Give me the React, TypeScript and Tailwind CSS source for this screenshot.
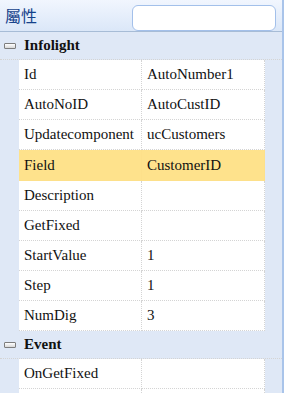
import React from "react";

type Row = { name: string; value: string; selected?: boolean };

const groups: { title: string; rows: Row[] }[] = [
  {
    title: "Infolight",
    rows: [
      { name: "Id", value: "AutoNumber1" },
      { name: "AutoNoID", value: "AutoCustID" },
      { name: "Updatecomponent", value: "ucCustomers" },
      { name: "Field", value: "CustomerID", selected: true },
      { name: "Description", value: "" },
      { name: "GetFixed", value: "" },
      { name: "StartValue", value: "1" },
      { name: "Step", value: "1" },
      { name: "NumDig", value: "3" },
    ],
  },
  {
    title: "Event",
    rows: [
      { name: "OnGetFixed", value: "" },
      { name: "", value: "" },
    ],
  },
];

function Collapse() {
  return (
    <span className="ml-[4px] mr-[8px] block h-[6px] w-[12px] rounded-[1px] border border-[#7d7d7d] bg-gradient-to-b from-white to-[#d8d8d8]" />
  );
}

function PropRow({ row }: { row: Row }) {
  const cell = row.selected
    ? "border-[#fde08a] bg-[#fee28c]"
    : "border-[#d4d4d4] border-dotted bg-white";
  return (
    <div className={`flex ${row.selected ? "h-[31px]" : "h-[30px]"}`}>
      <div className="w-[19px] shrink-0" />
      <div className={`flex w-[123px] shrink-0 items-center border-b border-r pl-[5px] ${cell}`}>
        {row.name}
      </div>
      <div className={`flex w-[123px] shrink-0 items-center border-b border-r pl-[5px] ${cell}`}>
        {row.value}
      </div>
    </div>
  );
}

export default function App() {
  return (
    <div className="h-[393px] w-[284px] overflow-hidden border-r-2 border-[#a9c4ea] bg-[#dfe8f6] font-['Liberation_Serif',serif] text-[15px] text-[#111]">
      <div className="flex h-[32px] items-start justify-between border-b border-[#a7bcd6] bg-gradient-to-b from-[#f1f6fe] to-[#dbe7f8]">
        <span className="mt-[4px] pl-[5px] font-['Noto_Sans_CJK_TC',sans-serif] text-[16px] leading-[22px] text-[#15428b]">
          屬性
        </span>
        <input
          className="mr-[6px] mt-[5px] h-[26px] w-[144px] rounded-[6px] border border-[#a3c0ea] bg-white outline-none"
          aria-label="search"
        />
      </div>
      {groups.map((g) => (
        <div key={g.title}>
          <div className="flex h-[28px] items-center border-b border-dotted border-[#d4d4d4] font-bold">
            <Collapse />
            {g.title}
          </div>
          {g.rows.map((r, i) => (
            <PropRow key={i} row={r} />
          ))}
        </div>
      ))}
    </div>
  );
}
